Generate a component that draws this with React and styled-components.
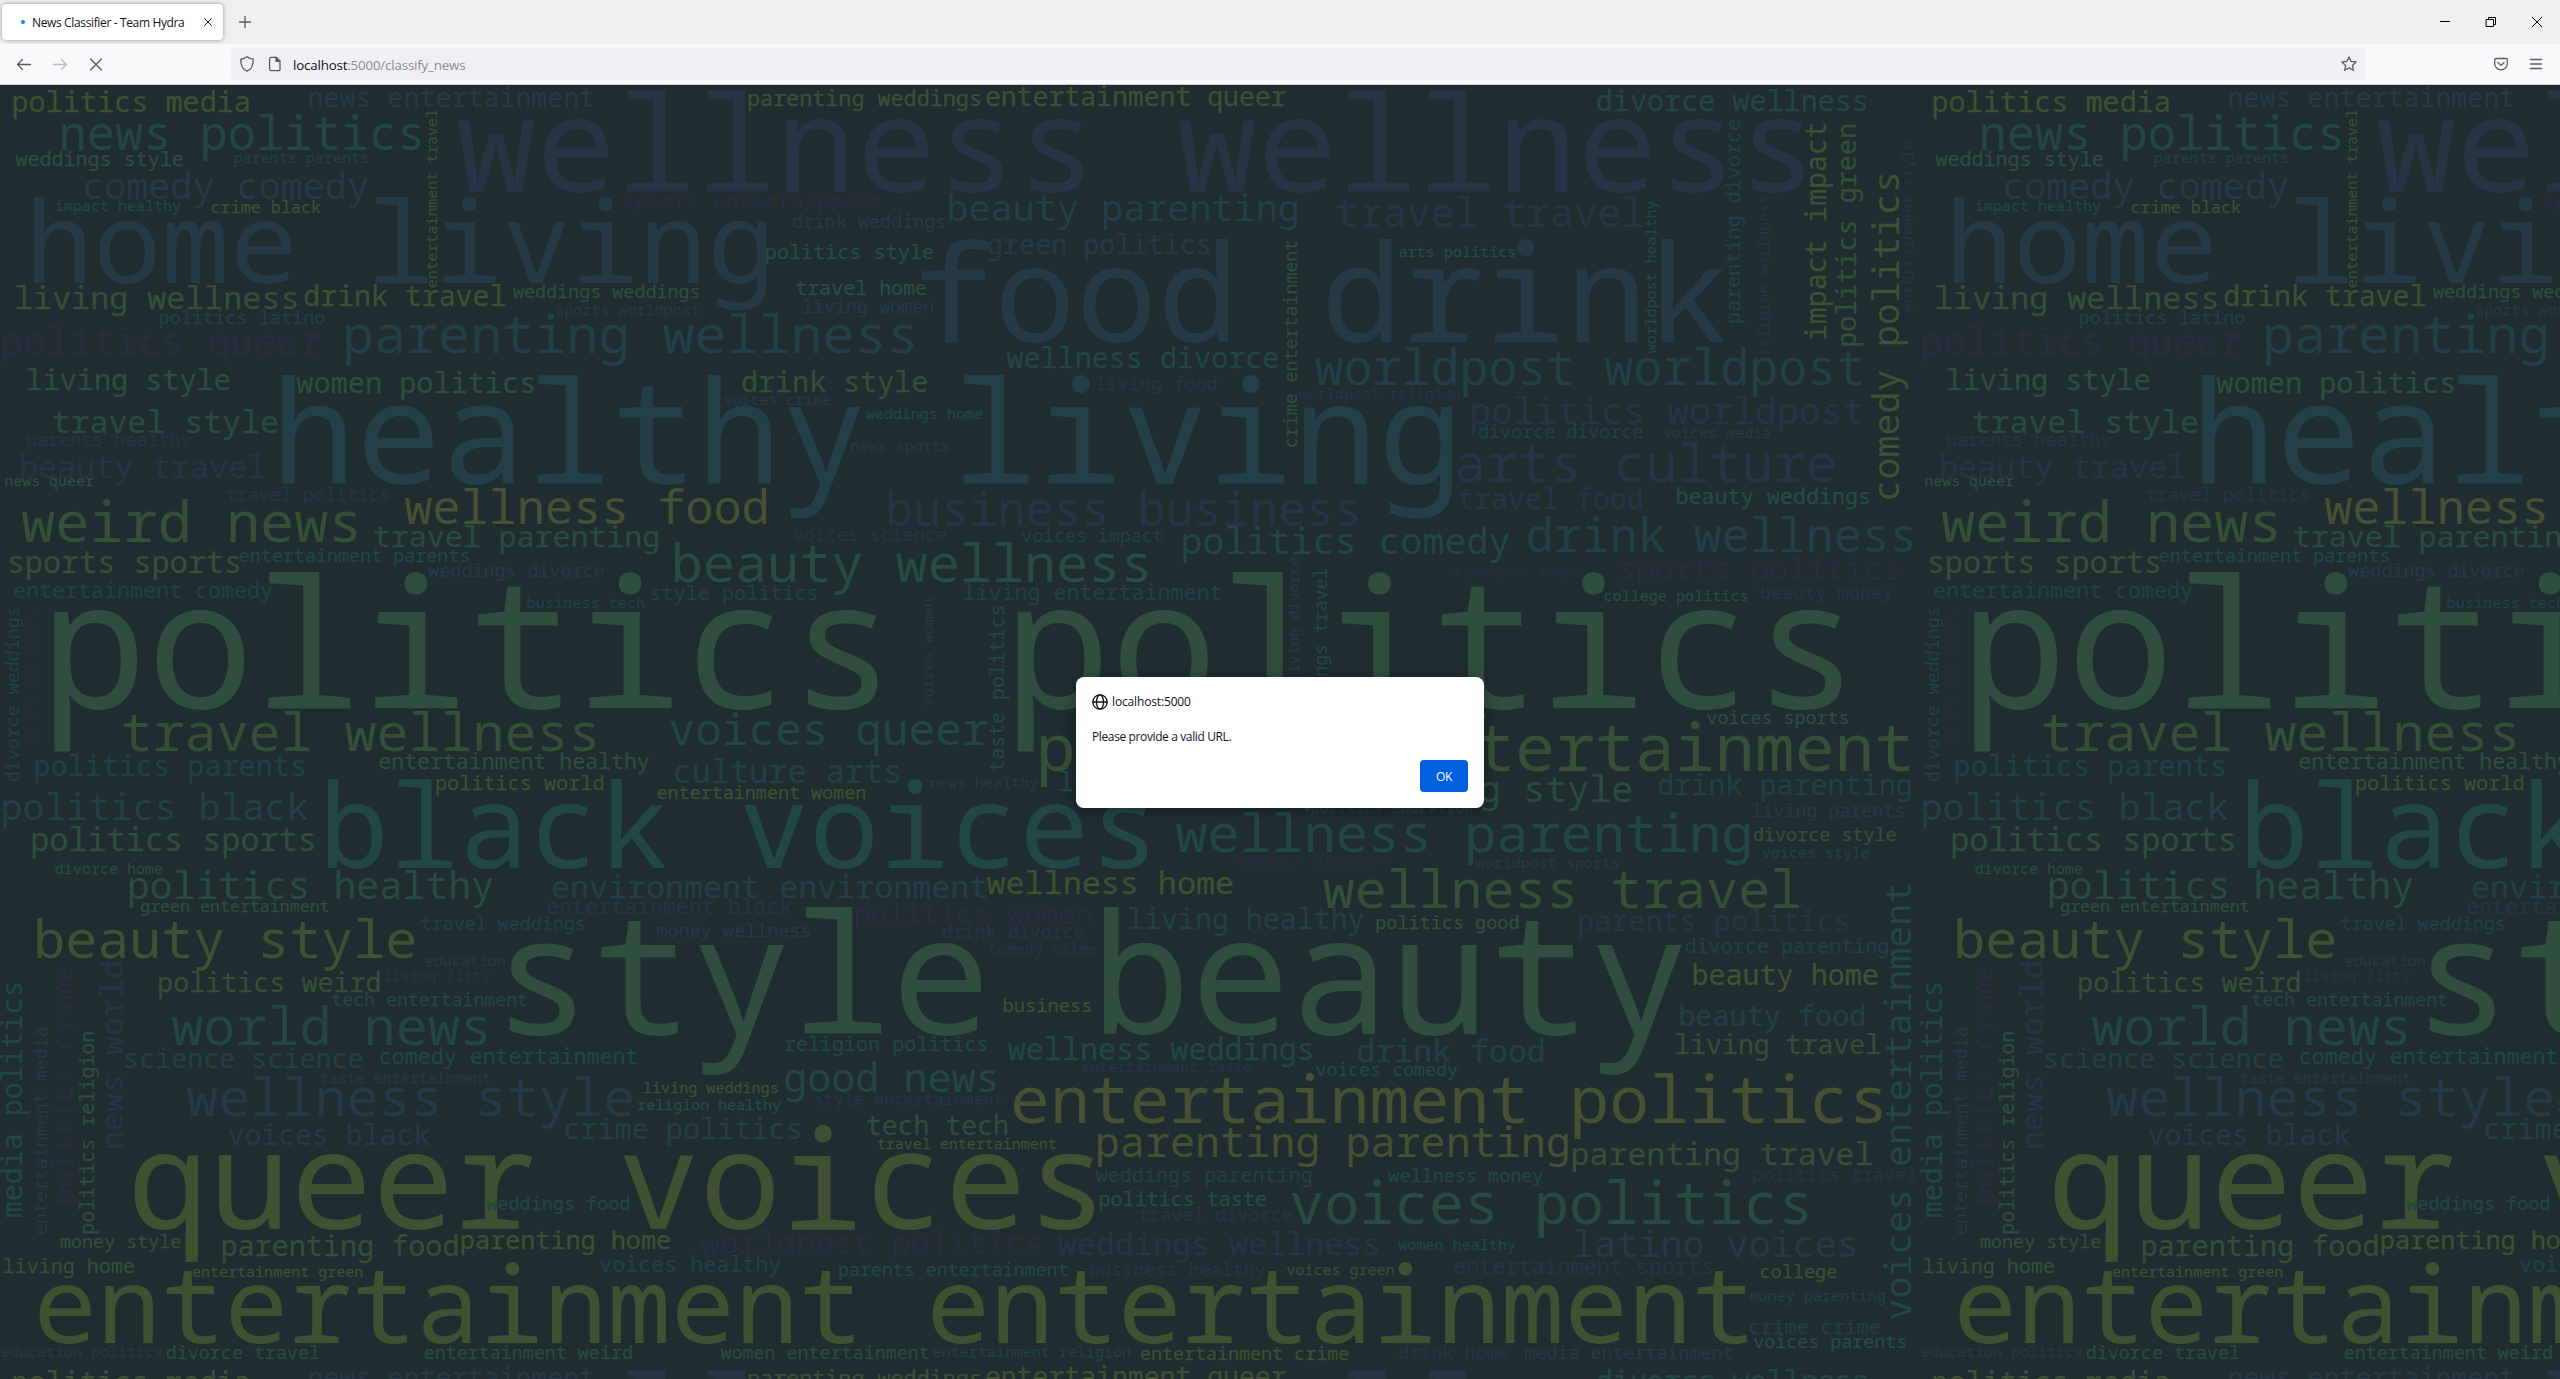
import React from "react";
import styled, { createGlobalStyle } from "styled-components";

const UI_FONT = `"Open Sans", "Noto Sans", sans-serif`;
const CLOUD_FONT = `"Droid Sans Mono", "Noto Sans Mono", "Liberation Mono", monospace`;

/* ---------- word cloud data ---------- */

const C = {
  Y: "#465033",
  O: "#405133",
  L: "#365038",
  G: "#304e3d",
  E: "#294c41",
  T: "#224745",
  C: "#233f47",
  B: "#263947",
  I: "#283345",
  P: "#2a2b3f",
};

// The cloud is split in nine sections of 650x440 px, each on a 1568x1320 grid.
const UNIT_X = 650 / 1568;
const UNIT_Y = 1 / 3;

// Horizontal word: [text, left, right, baseline, colour]
// Vertical word:   [text, bottom, top, baseline, colour, true]
const SECTIONS = [
  {
    x: 0, y: -0.4,
    words: [
      ["politics media", 33, 600, 84, "O"],
      ["news entertainment", 747, 1432, 68, "B"],
      ["news politics", 150, 1015, 200, "T"],
      ["weddings style", 38, 441, 246, "G"],
      ["parents parents", 566, 887, 235, "C"],
      ["comedy comedy", 205, 887, 345, "B"],
      ["impact healthy", 135, 436, 381, "T"],
      ["crime black", 511, 774, 387, "O"],
      ["home living", 82, 1852, 594, "B"],
      ["living wellness", 40, 715, 674, "L"],
      ["drink travel", 735, 1218, 665, "O"],
      ["weddings weddings", 1238, 1686, 642, "G"],
      ["sports worldpost", 1343, 1686, 693, "B"],
      ["politics latino", 386, 783, 720, "C"],
      ["politics queer", 8, 775, 812, "P"],
      ["parenting wellness", 835, 2204, 806, "C"],
      ["living style", 67, 553, 917, "G"],
      ["women politics", 716, 1287, 926, "G"],
      ["travel style", 128, 669, 1044, "E"],
      ["parents healthy", 66, 461, 1086, "I"],
      ["beauty travel", 52, 638, 1181, "I"],
      ["news queer", 13, 226, 1205, "G"],
      ["healthy living", 680, 3506, 1202, "C"],
      ["travel politics", 547, 938, 1251, "I"],
      ["weird news", 53, 861, 1375, "L"],
      ["wellness food", 977, 1849, 1319, "Y"],
      ["entertainment travel", 610, 76, 1054, "L", true],
      ["wellness wellness", 1105, 4353, 323, "I"],
      ["sports entertainment", 1505, 2124, 375, "P"],
    ],
  },
  {
    x: 640, y: -0.4,
    words: [
      ["parenting weddings", 262, 820, 64, "O"],
      ["entertainment queer", 835, 1559, 66, "O"],
      ["drink weddings", 368, 735, 430, "B"],
      ["beauty parenting", 746, 1586, 410, "C"],
      ["green politics", 840, 1373, 510, "B"],
      ["politics style", 305, 707, 522, "E"],
      ["travel home", 377, 690, 633, "G"],
      ["living women", 394, 707, 686, "B"],
      ["food drink", 678, 2620, 776, "B"],
      ["wellness divorce", 885, 1539, 852, "T"],
      ["drink style", 247, 692, 922, "L"],
      ["voices crime", 203, 459, 961, "B"],
      ["weddings home", 545, 826, 1005, "T"],
      ["news sports", 510, 745, 1102, "B"],
      ["living food", 1102, 1391, 918, "I"],
      ["business business", 600, 1731, 1326, "I"],
    ],
  },
  {
    x: 1280, y: -0.4,
    words: [
      ["divorce wellness", 765, 1414, 81, "T"],
      ["travel travel", 138, 876, 431, "I"],
      ["arts politics", 288, 567, 518, "E"],
      ["worldpost worldpost", 85, 1404, 902, "C"],
      ["worldpost religion", 46, 435, 943, "I"],
      ["politics worldpost", 463, 1405, 1019, "I"],
      ["divorce divorce", 480, 874, 1062, "C"],
      ["voices media", 925, 1183, 1060, "B"],
      ["arts culture", 428, 1338, 1194, "I"],
      ["travel food", 430, 873, 1275, "I"],
      ["beauty weddings", 958, 1421, 1260, "E"],
      ["crime entertainment", 1088, 470, 42, "G", true],
      ["worldpost healthy", 806, 350, 906, "T", true],
      ["parenting divorce", 712, 104, 1110, "C", true],
      ["religion worldpost", 812, 333, 1180, "I", true],
      ["impact impact", 763, 116, 1318, "O", true],
      ["politics green", 783, 120, 1392, "L", true],
      ["comedy politics", 1243, 270, 1495, "O", true],
      ["entertainment style", 680, 170, 1526, "I", true],
    ],
  },
  {
    x: 0, y: 429.6,
    words: [
      ["travel parenting", 903, 1588, 98, "E"],
      ["sports sports", 23, 577, 178, "L"],
      ["entertainment parents", 578, 1131, 144, "T"],
      ["weddings divorce", 1034, 1457, 189, "B"],
      ["entertainment comedy", 34, 657, 251, "C"],
      ["business tech", 1273, 1554, 282, "C"],
      ["divorce weddings", 800, 280, 46, "C", true],
      ["parenting money", 690, 288, 86, "P", true],
      ["politics politics", 130, 4444, 581, "G"],
      ["travel wellness", 297, 1436, 711, "L"],
      ["politics parents", 86, 734, 786, "C"],
      ["entertainment healthy", 915, 1566, 765, "G"],
      ["politics world", 1053, 1455, 825, "O"],
      ["politics black", 8, 743, 918, "C"],
      ["politics sports", 79, 757, 1010, "G"],
      ["black voices", 791, 2769, 1064, "T"],
      ["divorce home", 134, 392, 1080, "E"],
      ["politics healthy", 313, 1189, 1154, "E"],
      ["environment environment", 1333, 2379, 1152, "C"],
      ["entertainment black", 1320, 1911, 1199, "I"],
      ["green entertainment", 340, 793, 1194, "G"],
      ["travel weddings", 1017, 1409, 1247, "C"],
      ["beauty style", 90, 1000, 1332, "O"],
      ["style beauty", 1225, 4060, 1560, "G"],
    ],
  },
  {
    x: 640, y: 429.6,
    words: [
      ["voices science", 370, 738, 80, "I"],
      ["voices impact", 921, 1260, 84, "C"],
      ["politics comedy", 1311, 2097, 119, "T"],
      ["beauty wellness", 84, 1224, 204, "E"],
      ["style politics", 27, 427, 256, "C"],
      ["living entertainment", 782, 1402, 256, "C"],
      ["voices women", 573, 253, 708, "B", true],
      ["taste politics", 768, 275, 880, "T", true],
      ["voices queer", 72, 839, 692, "T"],
      ["culture arts", 85, 625, 806, "C"],
      ["entertainment women", 42, 543, 855, "O"],
      ["news healthy", 702, 960, 820, "B"],
      ["politics entertainment", 967, 3064, 774, "L"],
      ["living black", 1015, 1437, 833, "T"],
      ["wellness parenting", 1293, 2677, 1015, "T"],
      ["beauty divorce", 1437, 1806, 1062, "P"],
      ["wellness home", 837, 1429, 1139, "O"],
      ["politics women", 520, 1087, 1230, "P"],
      ["money wellness", 42, 410, 1267, "B"],
      ["drink divorce", 730, 1071, 1272, "I"],
      ["living healthy", 1180, 1746, 1244, "C"],
      ["comedy crime", 844, 1101, 1320, "I"],
    ],
  },
  {
    x: 1280, y: 429.6,
    words: [
      ["drink wellness", 598, 1527, 113, "C"],
      ["divorce food", 409, 724, 192, "P"],
      ["sports politics", 819, 1494, 197, "P"],
      ["college politics", 783, 1127, 262, "E"],
      ["beauty money", 1161, 1477, 255, "I"],
      ["living divorce", 500, 128, 46, "B", true],
      ["weddings travel", 650, 163, 113, "T", true],
      ["voices sports", 1030, 1370, 630, "G"],
      ["home", 400, 495, 625, "Y"],
      ["parenting style", 62, 848, 863, "E"],
      ["drink parenting", 913, 1522, 842, "C"],
      ["living parents", 1141, 1505, 907, "B"],
      ["politics education", 75, 465, 898, "B"],
      ["divorce style", 1143, 1485, 980, "L"],
      ["voices style", 1164, 1421, 1032, "C"],
      ["worldpost sports", 473, 817, 1060, "B"],
      ["wellness travel", 105, 1253, 1182, "L"],
      ["politics good", 233, 575, 1244, "L"],
      ["parents politics", 722, 1370, 1250, "I"],
      ["divorce parenting", 978, 1467, 1317, "C"],
      ["voices entertainment", 2415, 1110, 1522, "T", true],
    ],
  },
  {
    x: 0, y: 859.6,
    words: [
      ["education", 1027, 1218, 66, "B"],
      ["living fifty", 926, 1183, 111, "I"],
      ["politics weird", 384, 916, 144, "L"],
      ["tech entertainment", 802, 1271, 186, "T"],
      ["world news", 415, 1174, 302, "T"],
      ["science science", 303, 874, 371, "C"],
      ["comedy entertainment", 918, 1537, 360, "T"],
      ["taste entertainment", 773, 1182, 416, "B"],
      ["wellness style", 451, 1526, 516, "B"],
      ["voices black", 551, 1037, 600, "B"],
      ["living weddings", 1554, 1875, 447, "O"],
      ["religion healthy", 1539, 1883, 496, "E"],
      ["crime politics", 1364, 1930, 585, "C"],
      ["media politics", 816, 115, 54, "T", true],
      ["entertainment media", 870, 250, 113, "B", true],
      ["politics crime", 773, 68, 175, "P", true],
      ["politics religion", 866, 262, 229, "G", true],
      ["news world", 610, 53, 296, "I", true],
      ["queer voices", 322, 2641, 854, "O"],
      ["weddings food", 1174, 1518, 798, "T"],
      ["money style", 147, 435, 912, "L"],
      ["parenting food", 537, 1104, 935, "L"],
      ["parenting home", 1114, 1616, 914, "O"],
      ["living home", 10, 323, 987, "L"],
      ["voices healthy", 1447, 1883, 984, "C"],
      ["entertainment green", 465, 874, 999, "O"],
      ["entertainment entertainment", 92, 4218, 1196, "O"],
      ["education politics", 5, 390, 1239, "B"],
      ["divorce travel", 402, 770, 1245, "E"],
      ["entertainment weird", 1024, 1524, 1245, "E"],
    ],
  },
  {
    x: 640, y: 859.6,
    words: [
      ["business", 878, 1087, 204, "O"],
      ["religion politics", 349, 836, 321, "T"],
      ["wellness weddings", 888, 1621, 348, "T"],
      ["good news", 350, 858, 444, "T"],
      ["entertainment taste", 1065, 1475, 384, "I"],
      ["style entertainment", 423, 875, 483, "I"],
      ["entertainment politics", 900, 2997, 540, "Y"],
      ["tech tech", 548, 886, 572, "G"],
      ["travel entertainment", 573, 1003, 615, "O"],
      ["parenting parenting", 1105, 2239, 638, "Y"],
      ["weddings parenting", 1100, 1620, 714, "C"],
      ["politics taste", 1110, 1510, 786, "E"],
      ["travel divorce", 1204, 1572, 831, "I"],
      ["worldpost politics", 148, 967, 930, "P"],
      ["weddings wellness", 1009, 1781, 933, "I"],
      ["parents entertainment", 481, 1031, 996, "T"],
      ["business healthy", 1087, 1508, 996, "I"],
      ["women entertainment", 195, 696, 1245, "E"],
      ["entertainment religion", 708, 1183, 1239, "C"],
      ["entertainment crime", 1208, 1709, 1247, "O"],
    ],
  },
  {
    x: 1280, y: 859.6,
    words: [
      ["beauty home", 998, 1441, 122, "Y"],
      ["beauty food", 966, 1410, 246, "C"],
      ["living travel", 956, 1447, 330, "L"],
      ["drink food", 188, 636, 352, "C"],
      ["voices comedy", 87, 428, 396, "T"],
      ["wellness money", 262, 634, 714, "T"],
      ["parenting travel", 707, 1428, 660, "L"],
      ["politics travel", 1142, 1535, 710, "I"],
      ["voices politics", 27, 1273, 841, "E"],
      ["women healthy", 286, 568, 918, "T"],
      ["latino voices", 712, 1388, 938, "B"],
      ["entertainment sports", 420, 1042, 990, "I"],
      ["college", 1160, 1342, 1003, "O"],
      ["voices green", 17, 274, 993, "L"],
      ["money parenting", 1134, 1459, 1071, "C"],
      ["crime crime", 1134, 1447, 1171, "C"],
      ["voices parents", 1143, 1509, 1212, "E"],
      ["drink home", 287, 549, 1243, "I"],
      ["media entertainment", 592, 1091, 1243, "B"],
    ],
  },
];

const MEASURE_SIZE = 400;
const SMALL_WORD = 34;
const pen = document.createElement("canvas").getContext("2d");
pen.font = `${MEASURE_SIZE}px ${CLOUD_FONT}`;

// Sizes a word so that its ink spans exactly the given distance.
function fitWord(section, [text, from, to, base, tone, vertical]) {
  const m = pen.measureText(text);
  const bearing = -m.actualBoundingBoxLeft / MEASURE_SIZE;
  const ink = (m.actualBoundingBoxRight + m.actualBoundingBoxLeft) / MEASURE_SIZE;
  const asc = m.fontBoundingBoxAscent / MEASURE_SIZE;
  const desc = m.fontBoundingBoxDescent / MEASURE_SIZE;
  const baselineEm = (1 - asc - desc) / 2 + asc;
  const length = vertical ? (from - to) * UNIT_Y : (to - from) * UNIT_X;
  const size = length / ink;
  const originX = vertical
    ? section.x + base * UNIT_X
    : section.x + from * UNIT_X - bearing * size;
  const originY = vertical
    ? section.y + from * UNIT_Y + bearing * size
    : section.y + base * UNIT_Y;
  return {
    text,
    tone,
    vertical: Boolean(vertical),
    small: size < SMALL_WORD,
    place: {
      left: originX,
      top: originY - baselineEm * size,
      fontSize: size,
      transformOrigin: `0 ${baselineEm}em`,
    },
  };
}

const WORDS = SECTIONS.flatMap((s) => s.words.map((w) => fitWord(s, w)));

/* ---------- styles ---------- */

const GlobalStyle = createGlobalStyle`
  html, body { margin: 0; padding: 0; overflow: hidden; }
  * { box-sizing: border-box; }
`;

const Browser = styled.div`
  display: flex;
  flex-direction: column;
  width: 2560px;
  height: 1379px;
  overflow: hidden;
  font-family: ${UI_FONT};
  color: #15141a;
`;

const TabBar = styled.div`
  display: flex;
  align-items: center;
  flex: none;
  height: 44px;
  padding-left: 2px;
  background: #f0f0f0;
`;

const Tab = styled.div`
  display: flex;
  align-items: center;
  width: 221px;
  height: 36px;
  padding: 0 11px 0 19px;
  border-radius: 4px;
  background: #fff;
  box-shadow: 0 0 4px rgba(0, 0, 0, 0.4);
`;

const LoadingDot = styled.span`
  width: 4px;
  height: 4px;
  margin-right: 7px;
  border-radius: 50%;
  background: #0a84ff;
`;

const TabTitle = styled.span`
  flex: 1;
  padding-top: 1px;
  font-size: 12px;
  line-height: 16px;
  letter-spacing: -0.36px;
  white-space: nowrap;
`;

const Glyph = styled.svg`
  display: block;
  flex: none;
  width: ${(p) => p.$w}px;
  height: ${(p) => p.$h ?? p.$w}px;
  margin-left: ${(p) => p.$gap ?? 0}px;
  fill: none;
  stroke: ${(p) => p.$color ?? "#5b5b66"};
  stroke-width: ${(p) => p.$stroke ?? 1.3};
  stroke-linecap: round;
  stroke-linejoin: round;
  overflow: visible;
`;

const WindowButtons = styled.div`
  display: flex;
  align-items: center;
  gap: 36px;
  margin-left: auto;
  padding-right: 18px;
`;

const NavBar = styled.div`
  display: flex;
  align-items: center;
  flex: none;
  height: 41px;
  padding: 0 18px 0 16px;
  background: #f9f9fb;
  border-bottom: 1px solid #ccccd0;
`;

const AddressBar = styled.div`
  display: flex;
  align-items: center;
  width: 2134px;
  height: 32px;
  margin-left: 128px;
  padding: 0 8px;
  border-radius: 4px;
  background: #f0f0f4;
`;

const Address = styled.span`
  flex: 1;
  margin-left: 10px;
  padding-top: 2px;
  font-size: 13.3px;
  line-height: 18px;
  letter-spacing: -0.16px;
  color: #8b8b92;
`;

const Host = styled.span`
  color: #15141a;
`;

const NavActions = styled.div`
  display: flex;
  align-items: center;
  gap: 22px;
  margin-left: auto;
`;

const Page = styled.main`
  position: relative;
  flex: 1;
  overflow: hidden;
  background: #1f2c30;
`;

const Backdrop = styled.div`
  display: grid;
  grid-template-columns: 1920px 1920px;
  grid-auto-rows: 1280px;
`;

const Tile = styled.div`
  position: relative;
  overflow: hidden;
  font-family: ${CLOUD_FONT};
  line-height: 1;
`;

const Word = styled.span`
  position: absolute;
  white-space: pre;
  color: ${(p) => C[p.$tone]};
  -webkit-text-stroke: ${(p) => (p.$small ? "0.25px" : "0")} ${(p) => C[p.$tone]};
  transform: ${(p) => (p.$vertical ? "rotate(-90deg)" : "none")};
`;

const DialogLayer = styled.div`
  position: absolute;
  inset: 0;
  display: flex;
  justify-content: center;
  align-items: flex-start;
  padding-top: 592px;
`;

const Dialog = styled.section`
  display: flex;
  flex-direction: column;
  width: 408px;
  height: 131px;
  padding: 16px;
  border-radius: 8px;
  background: #fff;
  box-shadow: 0 2px 14px rgba(0, 0, 0, 0.35);
`;

const Origin = styled.header`
  display: flex;
  align-items: center;
  gap: 4px;
  height: 17px;
  font-size: 12px;
  font-weight: 500;
  letter-spacing: -0.15px;
`;

const Message = styled.p`
  margin: 18px 0 0;
  font-size: 12px;
  line-height: 17px;
  letter-spacing: -0.38px;
`;

const OkButton = styled.button`
  width: 48px;
  height: 32px;
  margin: auto 0 0 auto;
  padding: 0;
  border: 0;
  border-radius: 4px;
  background: #0060df;
  color: #fff;
  font: 500 12px ${UI_FONT};
  letter-spacing: -0.3px;
`;

/* ---------- components ---------- */

function CloudTile() {
  return (
    <Tile>
      {WORDS.map((w, i) => (
        <Word key={i} $tone={w.tone} $vertical={w.vertical} $small={w.small} style={w.place}>
          {w.text}
        </Word>
      ))}
    </Tile>
  );
}

export default function App() {
  return (
    <Browser>
      <GlobalStyle />
      <TabBar>
        <Tab>
          <LoadingDot />
          <TabTitle>News Classifier - Team Hydra</TabTitle>
          <Glyph $w={8} $color="#15141a" $stroke={1.1} viewBox="0 0 9 9">
            <path d="M.7.7l7.6 7.6M8.3.7L.7 8.3" />
          </Glyph>
        </Tab>
        <Glyph $w={12} $gap={16} viewBox="0 0 12 12">
          <path d="M6 .5v11M.5 6h11" />
        </Glyph>
        <WindowButtons>
          <Glyph $w={10} $color="#000" $stroke={1} viewBox="0 0 10 10">
            <path d="M0 4.5h10" strokeLinecap="butt" />
          </Glyph>
          <Glyph $w={10} $color="#000" $stroke={1} viewBox="0 0 10 10">
            <path d="M.5 2.5h7v7h-7zM2.5 2.5v-2h7v7h-2" strokeLinejoin="miter" />
          </Glyph>
          <Glyph $w={10} $color="#000" $stroke={1} viewBox="0 0 10 10">
            <path d="M.2.2l9.6 9.6M9.8.2L.2 9.8" />
          </Glyph>
        </WindowButtons>
      </TabBar>

      <NavBar>
        <Glyph $w={16} viewBox="0 0 16 16">
          <path d="M14.5 8.5h-13M6.5 3.5l-5 5 5 5" />
        </Glyph>
        <Glyph $w={16} $gap={20} $color="#b9b9bf" viewBox="0 0 16 16">
          <path d="M1.5 8.5h13M9.5 3.5l5 5-5 5" />
        </Glyph>
        <Glyph $w={16} $gap={19} viewBox="0 0 16 16">
          <path d="M3.5 3l11 11M14.5 3l-11 11" />
        </Glyph>
        <AddressBar>
          <Glyph $w={16} viewBox="0 0 16 16">
            <path d="M8 .8c2 1.500 4 2.100 6.200 2.300.3 5.600-1 9.900-6.200 12.100C2.800 13 1.500 8.700 1.800 3.100 4 2.900 6 2.300 8 .8z" />
          </Glyph>
          <Glyph $w={16} $gap={12} viewBox="0 0 16 16">
            <path d="M4 1.300h5l4 4v8a1.400 1.400 0 0 1-1.400 1.400H4a1.400 1.400 0 0 1-1.400-1.400V2.700A1.400 1.400 0 0 1 4 1.300z" />
            <path d="M9 1.300v4h4z" fill="#5b5b66" />
          </Glyph>
          <Address>
            <Host>localhost</Host>:5000/classify_news
          </Address>
          <Glyph $w={16} viewBox="0 0 16 16">
            <path d="M8 .9l2.100 4.500 5 .6-3.700 3.400 1 4.900L8 11.900l-4.400 2.400 1-4.900L.9 6l5-.6z" />
          </Glyph>
        </AddressBar>
        <NavActions>
          <Glyph $w={14} viewBox="0 0 14 14">
            <path d="M1.800 1.500h10.400a1.100 1.100 0 0 1 1.100 1.100v4a6.300 6.300 0 0 1-12.600 0v-4a1.100 1.100 0 0 1 1.100-1.100zM4 5.500l3 2.900 3-2.900" />
          </Glyph>
          <Glyph $w={12} viewBox="0 0 12 12">
            <path d="M.5 1.500h11M.5 6h11M.5 10.500h11" />
          </Glyph>
        </NavActions>
      </NavBar>

      <Page>
        <Backdrop>
          <CloudTile />
          <CloudTile />
          <CloudTile />
          <CloudTile />
        </Backdrop>
        <DialogLayer>
          <Dialog>
            <Origin>
              <Glyph $w={16} $color="#15141a" viewBox="0 0 16 16">
                <circle cx="8" cy="8" r="7.200" />
                <ellipse cx="8" cy="8" rx="3.500" ry="7.200" />
                <path d="M1 8h14" />
              </Glyph>
              localhost:5000
            </Origin>
            <Message>Please provide a valid URL.</Message>
            <OkButton>OK</OkButton>
          </Dialog>
        </DialogLayer>
      </Page>
    </Browser>
  );
}
